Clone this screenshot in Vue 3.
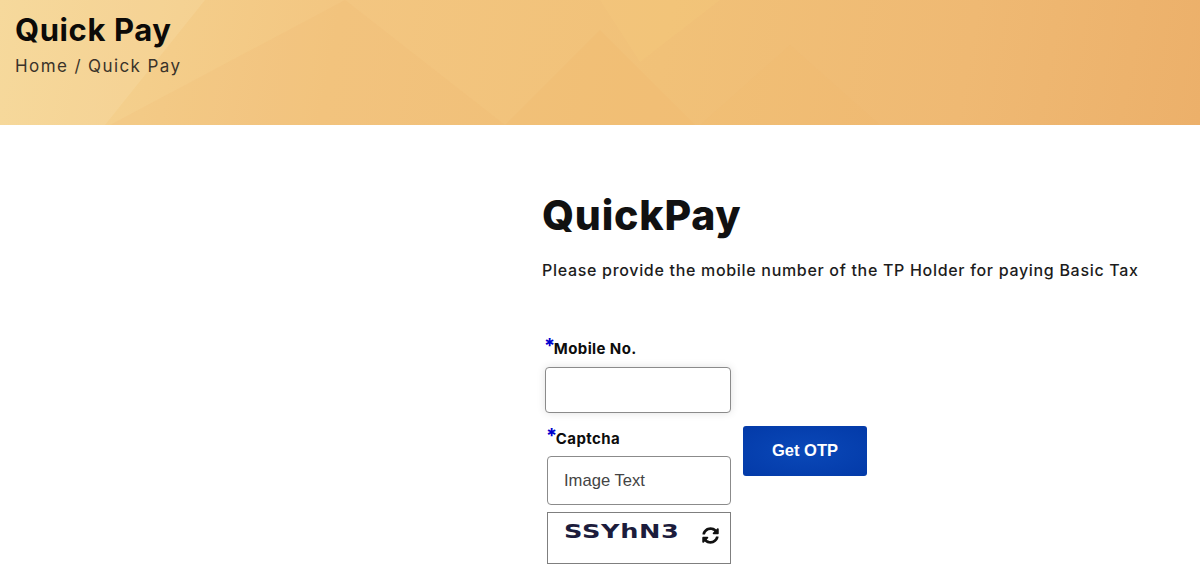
<template>
  <div class="page">
    <header class="banner">
      <svg class="facets" viewBox="0 0 1200 125" preserveAspectRatio="none" aria-hidden="true">
        <polygon points="0,0 205,0 105,125 0,125" fill="#fff3cf" opacity="0.14" />
        <polygon points="345,0 505,125 110,125" fill="#f0b269" opacity="0.14" />
        <polygon points="600,30 695,125 505,125" fill="#efb164" opacity="0.14" />
        <polygon points="600,0 720,0 640,62" fill="#f7d684" opacity="0.16" />
        <polygon points="790,45 880,125 700,125" fill="#eeb068" opacity="0.08" />
      </svg>
      <h2 class="banner-title">Quick Pay</h2>
      <div class="crumbs">Home / Quick Pay</div>
    </header>

    <main class="content">
      <h1 class="heading">QuickPay</h1>
      <p class="intro">Please provide the mobile number of the TP Holder for paying Basic Tax</p>

      <form class="pay-form" @submit.prevent>
        <div class="field mobile-field">
          <label class="field-label"><span class="req">*</span>Mobile No.</label>
          <input v-model="mobile" class="mobile-input" type="text" />
        </div>

        <div class="captcha-row">
          <div class="field captcha-field">
            <label class="field-label"><span class="req">*</span>Captcha</label>
            <input v-model="captcha" class="captcha-input" type="text" placeholder="Image Text" />
            <div class="captcha-box">
              <span class="captcha-text">SSYhN3</span>
              <svg class="refresh" viewBox="0 0 512 512" aria-hidden="true">
                <path d="M370.7 133.3C339.5 104 298.9 88 255.8 88c-77.5.1-144.3 53.2-162.8 126.9-1.3 5.4-6.1 9.2-11.7 9.2H24.1c-7.5 0-13.2-6.8-11.8-14.2C33.9 94.9 134.8 8 256 8c66.4 0 126.8 26.1 171.3 68.7L463 41c15.1-15.1 41-4.4 41 17V192c0 13.3-10.7 24-24 24H345.9c-21.4 0-32.1-25.9-17-41l41.8-41.7zM32 296h134.1c21.4 0 32.1 25.9 17 41l-41.8 41.8c31.3 29.3 71.8 45.3 114.9 45.2 77.4-.1 144.3-53.1 162.8-126.8 1.3-5.4 6.1-9.2 11.7-9.2h57.3c7.5 0 13.2 6.8 11.8 14.2C478.100 417.100 377.200 504 256 504c-66.400 0-126.800-26.100-171.300-68.700L49 471c-15.100 15.100-41 4.400-41-17V320c0-13.300 10.700-24 24-24z" />
              </svg>
            </div>
          </div>
          <button class="otp-btn" type="submit">Get OTP</button>
        </div>
      </form>
    </main>
  </div>
</template>

<script setup>
import { ref } from 'vue'

const mobile = ref('')
const captcha = ref('')
</script>

<style>
html,
body {
  margin: 0;
  background: #fff;
  overflow: hidden;
}
</style>

<style scoped>
.page {
  font-family: Inter, "Liberation Sans", sans-serif;
  color: #111;
}

.banner {
  position: relative;
  box-sizing: border-box;
  height: 125px;
  padding: 11px 15px 0;
  background: linear-gradient(100deg, #f5d594 0%, #f3c681 28%, #f1c178 55%, #efb973 80%, #ecb06a 100%);
}

.facets {
  position: absolute;
  inset: 0;
  width: 100%;
  height: 100%;
}

.banner-title,
.crumbs {
  position: relative;
}

.banner-title {
  margin: 0;
  font-size: 31px;
  line-height: 38px;
  font-weight: 700;
  letter-spacing: 0.6px;
  color: #0c0a08;
}

.crumbs {
  margin-top: 7px;
  font-size: 17px;
  line-height: 20px;
  letter-spacing: 1.4px;
  color: #3a332a;
}

.content {
  padding: 65px 0 0 542px;
}

.heading {
  margin: 0;
  font-size: 41px;
  line-height: 50px;
  font-weight: 800;
  letter-spacing: 0.8px;
  color: #111;
}

.intro {
  margin: 19px 0 0;
  font-size: 16px;
  line-height: 22px;
  font-weight: 500;
  letter-spacing: 0.69px;
  color: #1c1c1c;
  white-space: nowrap;
}

.pay-form {
  margin-top: 59px;
}

.field {
  display: flex;
  flex-direction: column;
}

.mobile-field {
  width: 186px;
  margin-left: 3px;
}

.field-label {
  font-size: 15px;
  line-height: 18px;
  font-weight: 700;
  letter-spacing: 0.4px;
  color: #0d0d0d;
  white-space: nowrap;
}

.req {
  color: #0000cd;
  font-size: 20px;
  line-height: 14px;
  letter-spacing: -1.4px;
  margin-left: -1px;
  position: relative;
  top: -1px;
}

.mobile-input {
  box-sizing: border-box;
  width: 186px;
  height: 46px;
  margin-top: 9px;
  border: 1px solid #8b8b8b;
  border-radius: 4px;
  box-shadow: 0 0 8px rgba(0, 0, 0, 0.12);
  outline: none;
  background: #fff;
}

.captcha-row {
  display: flex;
  align-items: flex-start;
  gap: 12px;
  margin-top: 13px;
  margin-left: 5px;
}

.captcha-field {
  width: 184px;
  padding-top: 4px;
}

.captcha-input {
  box-sizing: border-box;
  width: 184px;
  height: 49px;
  margin-top: 8px;
  padding: 0 16px;
  border: 1px solid #8b8b8b;
  border-radius: 4px;
  outline: none;
  background: #fff;
  font-family: "Liberation Sans", Arial, sans-serif;
  font-size: 16.6px;
}

.captcha-input::placeholder {
  color: #444;
  opacity: 1;
}

.captcha-box {
  box-sizing: border-box;
  display: flex;
  justify-content: space-between;
  align-items: flex-start;
  width: 184px;
  height: 52px;
  margin-top: 7px;
  padding: 7px 11px 0 16px;
  border: 1px solid #7f7f7f;
}

.captcha-text {
  font-family: "DejaVu Sans", sans-serif;
  font-size: 20px;
  line-height: 22px;
  font-weight: 700;
  letter-spacing: 0.5px;
  color: #1c1c3c;
  transform: scaleX(1.28);
  transform-origin: left;
}

.refresh {
  width: 17px;
  height: 17px;
  margin-top: 7px;
  fill: #111;
}

.otp-btn {
  width: 124px;
  height: 50px;
  padding: 0 0 2px;
  border: none;
  border-radius: 3px;
  background: radial-gradient(ellipse at center, #0a48b8 0%, #033aa8 100%);
  color: #fff;
  font-family: "Liberation Sans", Arial, sans-serif;
  font-size: 16.5px;
  font-weight: 700;
  cursor: pointer;
}
</style>
